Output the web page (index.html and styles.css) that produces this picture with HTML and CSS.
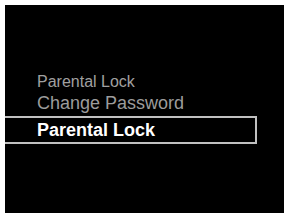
FILE: index.html
```
<!DOCTYPE html>
<html lang="en">
<head>
    <meta charset="UTF-8">
    <meta name="viewport" content="width=device-width, initial-scale=1.0">
    <title>Parental Lock</title>
    <link rel="stylesheet" href="styles.css">
</head>
<body>
    <div class="screen">
        <div class="menu">
            <div class="menu-title">Parental Lock</div>
            <div class="menu-item">Change Password</div>
            <div class="menu-item selected">Parental Lock</div>
        </div>
    </div>
</body>
</html>
```

FILE: styles.css
```
body {
    font-family: "Liberation Sans", Arial, sans-serif;
    background-color: #fff;
    margin: 0;
    padding: 5px 0 0 5px;
}

.screen {
    background-color: #000;
    width: 279px;
    height: 208px;
    box-sizing: border-box;
    padding-top: 66px;
}

.menu-title {
    color: #a0a0a0;
    font-size: 16px;
    line-height: 21px;
    padding-left: 32px;
}

.menu-item {
    color: #9c9c9c;
    font-size: 18px;
    line-height: 22px;
    padding-left: 32px;
}

.selected {
    color: #fff;
    font-weight: bold;
    width: 252px;
    box-sizing: border-box;
    height: 28px;
    line-height: 24px;
    border: 2px solid #c0c0c0;
    border-left: none;
    margin-top: 2px;
}
```
